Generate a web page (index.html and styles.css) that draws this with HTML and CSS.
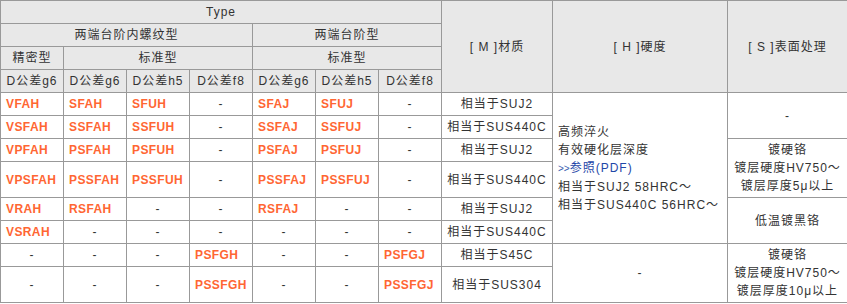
FILE: index.html
```html
<!DOCTYPE html>
<html lang="zh">
<head>
<meta charset="utf-8">
<title>Type table</title>
<link rel="stylesheet" href="styles.css">
</head>
<body>
<table class="spec">
  <colgroup>
    <col class="c-code"><col class="c-code"><col class="c-code"><col class="c-code">
    <col class="c-code"><col class="c-code"><col class="c-code">
    <col class="c-mat"><col class="c-hard"><col class="c-surf">
  </colgroup>
  <thead>
    <tr>
      <th colspan="7">Type</th>
      <th rowspan="4">[ M ]材质</th>
      <th rowspan="4">[ H ]硬度</th>
      <th rowspan="4">[ S ]表面处理</th>
    </tr>
    <tr>
      <th colspan="4">两端台阶内螺纹型</th>
      <th colspan="3">两端台阶型</th>
    </tr>
    <tr>
      <th>精密型</th>
      <th colspan="3">标准型</th>
      <th colspan="3">标准型</th>
    </tr>
    <tr>
      <th>D公差g6</th><th>D公差g6</th><th>D公差h5</th><th>D公差f8</th>
      <th>D公差g6</th><th>D公差h5</th><th>D公差f8</th>
    </tr>
  </thead>
  <tbody>
    <tr>
      <td class="code">VFAH</td><td class="code">SFAH</td><td class="code">SFUH</td><td class="na">-</td>
      <td class="code">SFAJ</td><td class="code">SFUJ</td><td class="na">-</td>
      <td class="mat">相当于SUJ2</td>
      <td class="hard" rowspan="6">高频淬火<br>有效硬化层深度<br><a class="link" href="#"><span class="arr">&gt;&gt;</span>参照(PDF)</a><br>相当于SUJ2 58HRC～<br>相当于SUS440C 56HRC～</td>
      <td class="surf" rowspan="2">-</td>
    </tr>
    <tr>
      <td class="code">VSFAH</td><td class="code">SSFAH</td><td class="code">SSFUH</td><td class="na">-</td>
      <td class="code">SSFAJ</td><td class="code">SSFUJ</td><td class="na">-</td>
      <td class="mat">相当于SUS440C</td>
    </tr>
    <tr>
      <td class="code">VPFAH</td><td class="code">PSFAH</td><td class="code">PSFUH</td><td class="na">-</td>
      <td class="code">PSFAJ</td><td class="code">PSFUJ</td><td class="na">-</td>
      <td class="mat">相当于SUJ2</td>
      <td class="surf" rowspan="2">镀硬铬<br>镀层硬度HV750～<br>镀层厚度5μ以上</td>
    </tr>
    <tr class="tall">
      <td class="code">VPSFAH</td><td class="code">PSSFAH</td><td class="code">PSSFUH</td><td class="na">-</td>
      <td class="code">PSSFAJ</td><td class="code">PSSFUJ</td><td class="na">-</td>
      <td class="mat">相当于SUS440C</td>
    </tr>
    <tr>
      <td class="code">VRAH</td><td class="code">RSFAH</td><td class="na">-</td><td class="na">-</td>
      <td class="code">RSFAJ</td><td class="na">-</td><td class="na">-</td>
      <td class="mat">相当于SUJ2</td>
      <td class="surf" rowspan="2">低温镀黑铬</td>
    </tr>
    <tr>
      <td class="code">VSRAH</td><td class="na">-</td><td class="na">-</td><td class="na">-</td>
      <td class="na">-</td><td class="na">-</td><td class="na">-</td>
      <td class="mat">相当于SUS440C</td>
    </tr>
    <tr>
      <td class="na">-</td><td class="na">-</td><td class="na">-</td><td class="code">PSFGH</td>
      <td class="na">-</td><td class="na">-</td><td class="code">PSFGJ</td>
      <td class="mat">相当于S45C</td>
      <td class="surf" rowspan="2">-</td>
      <td class="surf" rowspan="2">镀硬铬<br>镀层硬度HV750～<br>镀层厚度10μ以上</td>
    </tr>
    <tr class="tall">
      <td class="na">-</td><td class="na">-</td><td class="na">-</td><td class="code">PSSFGH</td>
      <td class="na">-</td><td class="na">-</td><td class="code">PSSFGJ</td>
      <td class="mat">相当于SUS304</td>
    </tr>
  </tbody>
</table>
</body>
</html>
```

FILE: styles.css
```css
html, body {
  margin: 0;
  padding: 0;
  background: #fff;
}

.spec {
  border-collapse: collapse;
  table-layout: fixed;
  width: 847px;
  font-family: "Liberation Sans", Arial, "Noto Sans CJK SC", sans-serif;
  font-size: 12px;
  line-height: 18px;
  color: #333;
  letter-spacing: 1px;
}

.c-code { width: 63px; }
.c-mat { width: 111px; }
.c-hard { width: 175px; }
.c-surf { width: 120px; }

.spec th,
.spec td {
  border: 1px solid #999;
  padding: 2px 5px;
  vertical-align: middle;
  height: 18px;
}

.spec th {
  background: #e8e8e8;
  font-weight: normal;
  text-align: center;
  white-space: nowrap;
}

.spec td {
  text-align: center;
  white-space: nowrap;
}

.spec td.code {
  text-align: left;
  color: #ff6633;
  font-weight: bold;
  letter-spacing: 0.4px;
}

.spec tr.tall td {
  height: 31px;
}

.spec td.hard {
  text-align: left;
}

.link {
  color: #1f47a8;
  text-decoration: none;
}

.arr {
  font-size: 10px;
  letter-spacing: 0;
  color: #3a5db0;
}
```
